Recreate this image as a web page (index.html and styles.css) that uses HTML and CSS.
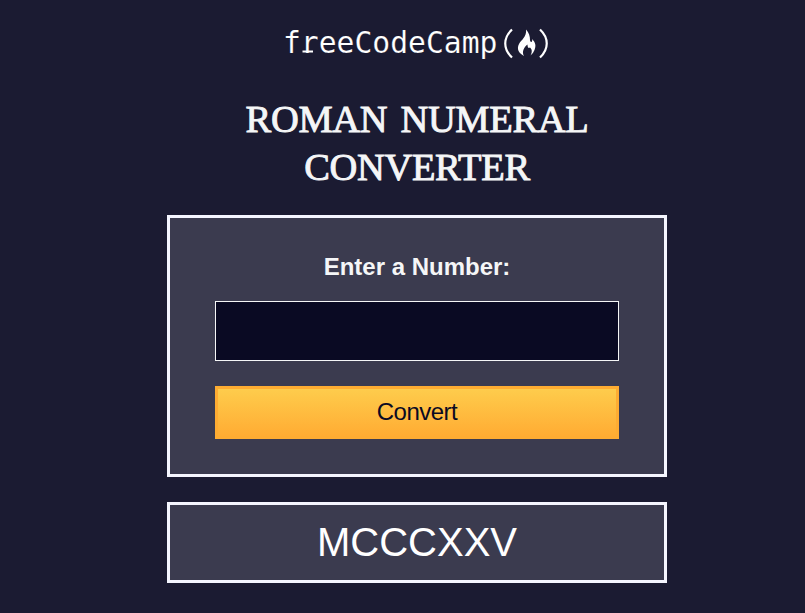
FILE: index.html
```html
<!DOCTYPE html>
<html lang="en">
<head>
<meta charset="utf-8">
<title>Roman Numeral Converter</title>
<link rel="stylesheet" href="styles.css">
</head>
<body>
<main class="page">
  <svg class="logo" width="268" height="36" viewBox="0 0 268 36" role="img" aria-label="freeCodeCamp">
    <text class="logo-text" x="-1" y="27.500">freeCodeCamp</text>
    <path class="foot" d="M18.500 26.500H29"/>
    <path class="paren" d="M228 4.500C219 13 219 24 228 32.500M256 4.500C265 13 265 24 256 32.500"/>
    <path class="flame" d="M242 4.500C245 8 246 11 246 15C246 17 247.500 17.500 248 16.500Q248.500 15.500 248 14C252 18 252 21 250.500 25Q249.500 28 246.500 30.500C248.500 27 248 24 246 22.500C244.500 23.500 243.500 22.500 243.500 19.500C240 22 237.500 27 240 31C234.500 28 232.500 24 235 19C237 15 243 12 242 4.500Z"/>
  </svg>
  <h1 class="title">Roman Numeral Converter</h1>
  <form class="panel form">
    <label class="label" for="number">Enter a Number:</label>
    <input class="number" id="number" type="text">
    <button class="convert" type="button">Convert</button>
  </form>
  <output class="panel output">MCCCXXV</output>
</main>
</body>
</html>
```
FILE: styles.css
```css
* { box-sizing: border-box; }
body {
  margin: 0;
  min-height: 613px;
  overflow: hidden;
  background: #1b1b32;
  color: #f5f6f7;
  font-family: "Liberation Sans", Arial, sans-serif;
}
.page {
  display: flex;
  flex-direction: column;
  align-items: center;
  width: 834px;
  padding-top: 25px;
}
.logo { display: block; margin-left: 2px; overflow: visible; }
.logo-text {
  fill: #fff;
  stroke: #1b1b32;
  stroke-width: 0.15px;
  font-family: "DejaVu Sans Mono", monospace;
  font-size: 29.7px;
}
.foot { fill: none; stroke: #fff; stroke-width: 2; }
.paren { fill: none; stroke: #fff; stroke-width: 2.2; }
.flame { fill: #fff; }
.title {
  width: 400px;
  margin: 34px 0 24px;
  font-family: "Liberation Serif", serif;
  font-size: 38.5px;
  font-weight: 400;
  line-height: 48px;
  letter-spacing: -0.35px;
  word-spacing: 4px;
  text-align: center;
  text-transform: uppercase;
  -webkit-text-stroke: 0.9px #f5f6f7;
}
.panel {
  width: 500px;
  border: 3px solid #f5f6ff;
  background: #3b3b4f;
}
.form {
  display: flex;
  flex-direction: column;
  align-items: center;
  height: 262px;
  padding: 33px 45px 0;
}
.label {
  font-size: 24px;
  font-weight: 700;
  line-height: 32px;
}
.number {
  width: 100%;
  height: 60px;
  margin: 18px 0 25px;
  border: 1px solid #f5f6f7;
  background: #0a0a23;
  color: #f5f6f7;
  font-size: 24px;
  text-align: center;
}
.convert {
  width: 100%;
  height: 53px;
  padding: 0 0 2px;
  border: 3px solid #feac32;
  background: linear-gradient(#fecc4c, #ffac33);
  color: #0a0a23;
  font-family: inherit;
  font-size: 24px;
  letter-spacing: -0.5px;
}
.output {
  display: block;
  height: 81px;
  margin-top: 25px;
  color: #fff;
  font-size: 40px;
  line-height: 75px;
  text-align: center;
}
```
